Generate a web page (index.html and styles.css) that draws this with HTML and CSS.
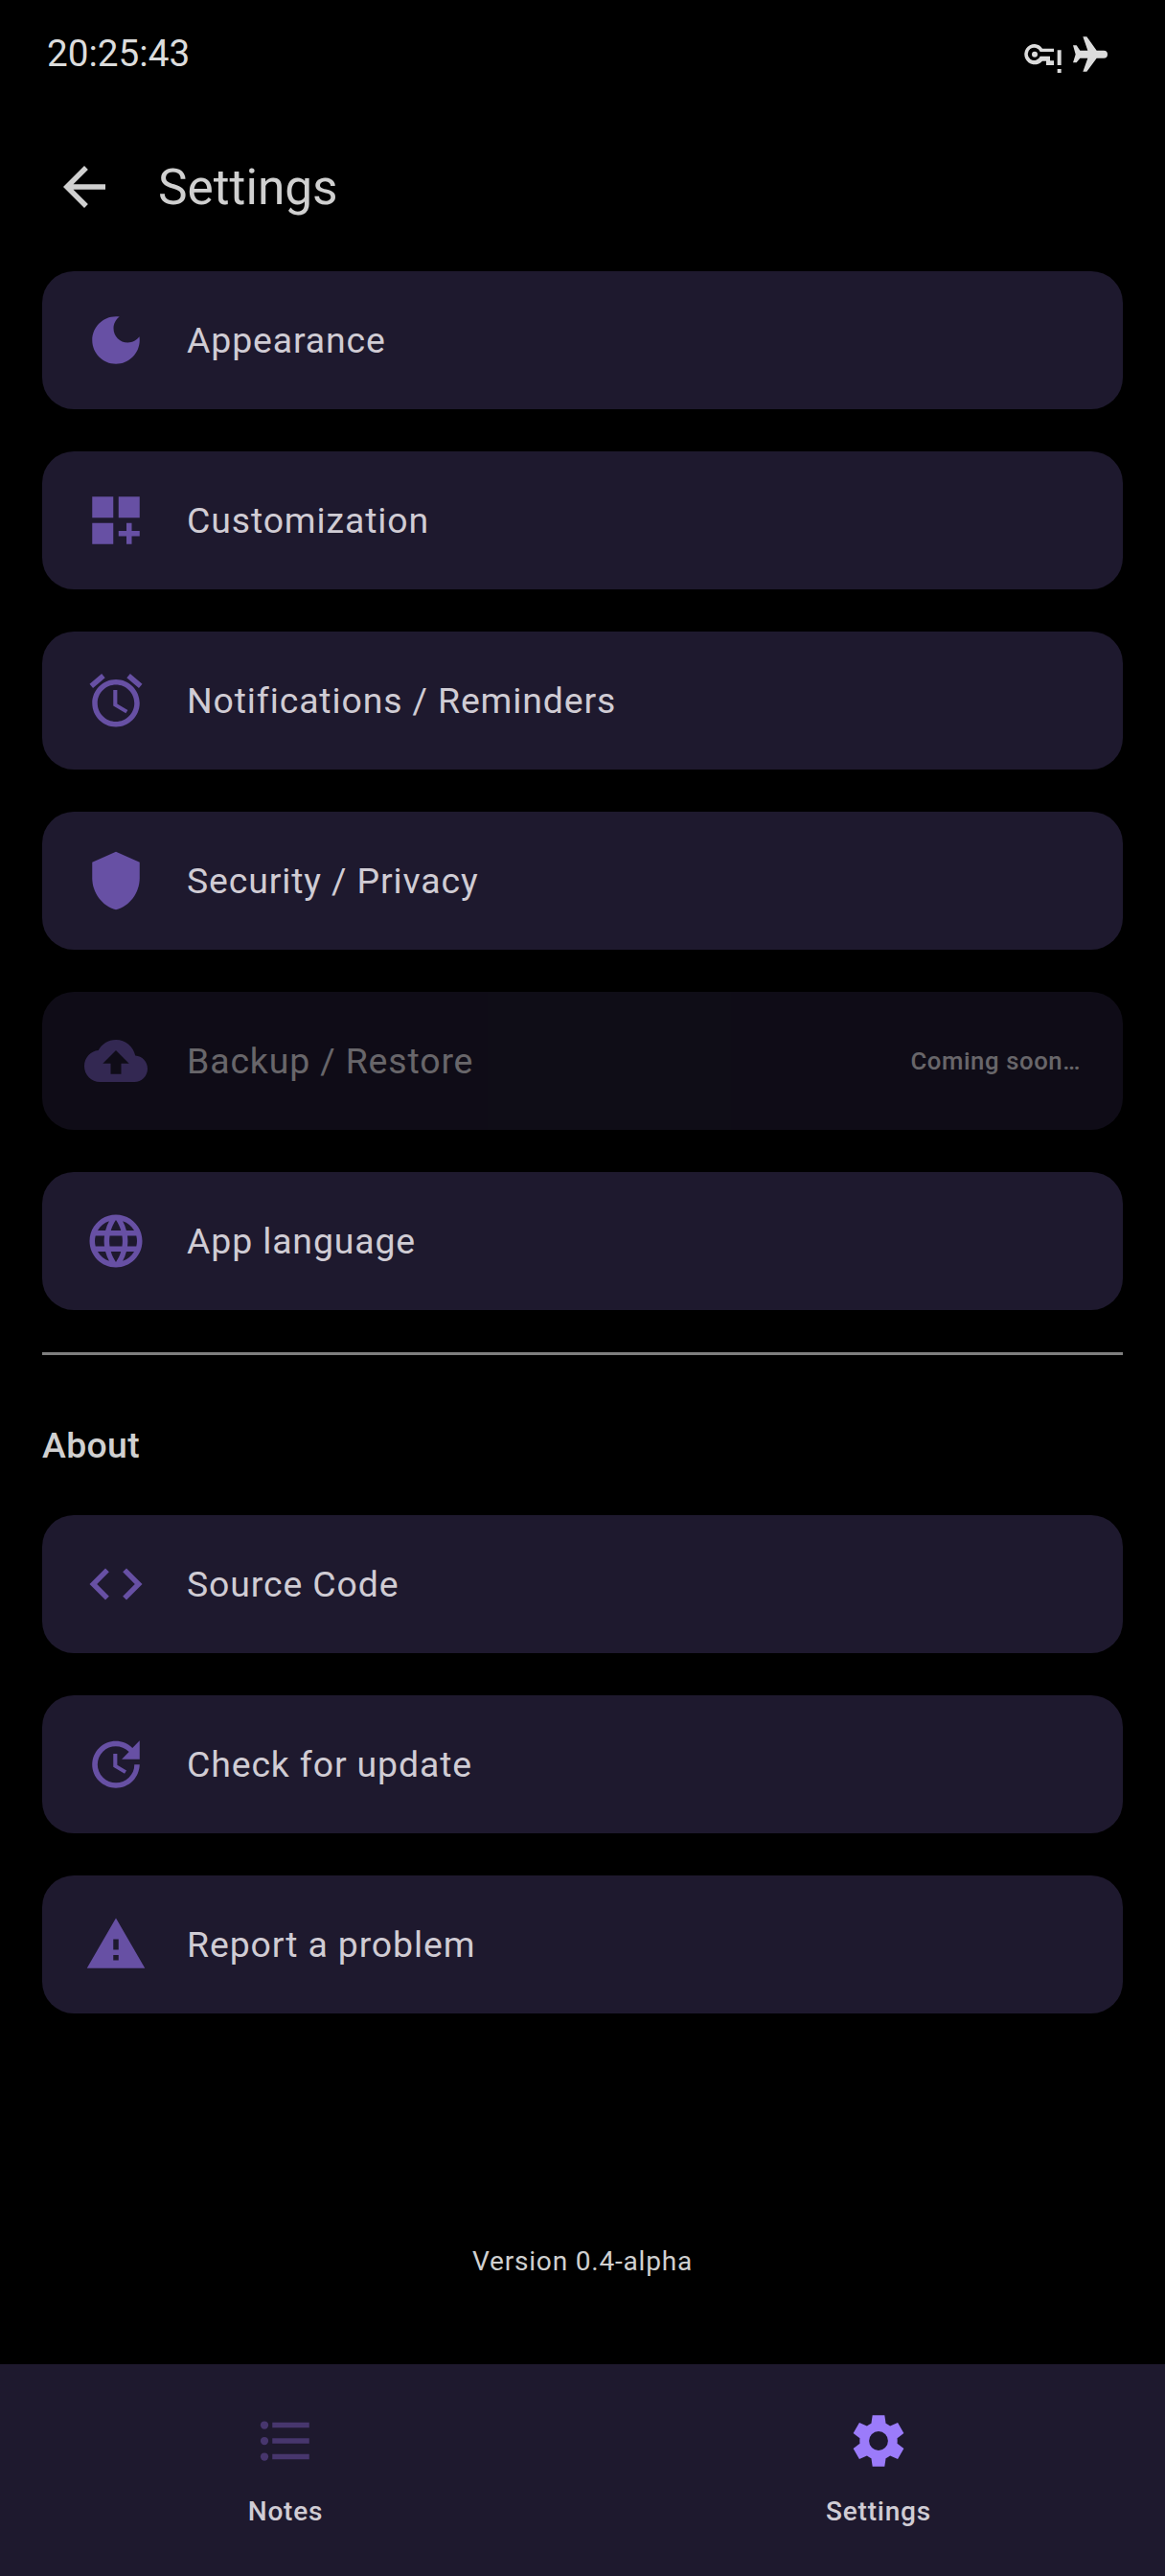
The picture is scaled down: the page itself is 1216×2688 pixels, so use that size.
FILE: index.html
```html
<!DOCTYPE html>
<html lang="en">
<head>
<meta charset="utf-8">
<title>Settings</title>
<link rel="stylesheet" href="styles.css">
</head>
<body>
<div class="screen">
  <header class="status-bar">
    <span class="clock">20:25:43</span>
    <svg class="status-icons" viewBox="156 108 270 126" aria-hidden="true">
      <path fill-rule="evenodd" d="M192 138a32 32 0 1 0 24 53h12v13h24v-14h-12v-14h-31a20 20 0 1 1 0-14h43v-10h-36a32 32 0 0 0-24-14z"/>
      <circle cx="192" cy="170" r="9"/>
      <path d="M263 157h12v47h-12zM263 216h12v12h-12z"/>
      <path d="M312 142h11l11 16h24l-15-43h12l31 43h22a12 12 0 0 1 0 24h-22l-31 42h-12l15-42h-24l-11 14h-11l8-26z"/>
    </svg>
  </header>

  <div class="top-bar">
    <svg class="icon" viewBox="0 0 24 24"><path d="M20 11H7.83l5.59-5.59L12 4l-8 8 8 8 1.41-1.41L7.83 13H20v-2z"/></svg>
    <h1 class="title">Settings</h1>
  </div>

  <main class="content">
    <section class="group">
      <a class="card"><svg class="icon" viewBox="0 0 24 24"><path d="M12 3c-4.97 0-9 4.03-9 9s4.03 9 9 9 9-4.03 9-9c0-.46-.04-.92-.1-1.36-.98 1.37-2.58 2.26-4.4 2.26-2.98 0-5.4-2.42-5.4-5.4 0-1.81.89-3.42 2.26-4.4C12.92 3.04 12.46 3 12 3z"/></svg><span class="label">Appearance</span></a>
      <a class="card"><svg class="icon" viewBox="0 0 24 24"><path d="M3 3h8v8H3zM13 3h8v8h-8zM3 13h8v8H3zM18 13h-2v3h-3v2h3v3h2v-3h3v-2h-3z"/></svg><span class="label">Customization</span></a>
      <a class="card"><svg class="icon" viewBox="0 0 24 24"><path d="M22 5.72l-4.6-3.86-1.29 1.53 4.6 3.86L22 5.72zM7.88 3.39L6.6 1.86 2 5.71l1.29 1.53 4.59-3.85zM12.5 8H11v6l4.75 2.85.75-1.23-4-2.37V8zM12 4c-4.97 0-9 4.03-9 9s4.02 9 9 9c4.97 0 9-4.03 9-9s-4.03-9-9-9zm0 16c-3.87 0-7-3.13-7-7s3.13-7 7-7 7 3.13 7 7-3.13 7-7 7z"/></svg><span class="label">Notifications / Reminders</span></a>
      <a class="card"><svg class="icon" viewBox="0 0 24 24"><path d="M12 1L3 5v6c0 5.55 3.84 10.74 9 12 5.16-1.26 9-6.45 9-12V5l-9-4z"/></svg><span class="label">Security / Privacy</span></a>
      <a class="card disabled"><svg class="icon" viewBox="0 0 24 24"><path d="M19.35 10.04C18.67 6.59 15.64 4 12 4 9.11 4 6.6 5.64 5.35 8.04 2.34 8.36 0 10.91 0 14c0 3.31 2.69 6 6 6h13c2.76 0 5-2.24 5-5 0-2.64-2.05-4.78-4.65-4.96zM14 13v4h-4v-4H7l5-5 5 5h-3z"/></svg><span class="label">Backup / Restore</span><span class="note">Coming soon…</span></a>
      <a class="card"><svg class="icon" viewBox="0 0 24 24"><path d="M11.99 2C6.47 2 2 6.48 2 12s4.47 10 9.99 10C17.52 22 22 17.52 22 12S17.52 2 11.99 2zm6.93 6h-2.95c-.32-1.25-.78-2.45-1.38-3.56 1.84.63 3.37 1.91 4.33 3.56zM12 4.04c.83 1.2 1.48 2.53 1.91 3.96h-3.82c.43-1.43 1.08-2.76 1.91-3.96zM4.26 14C4.1 13.36 4 12.69 4 12s.1-1.36.26-2h3.38c-.08.66-.14 1.32-.14 2s.06 1.34.14 2H4.26zm.82 2h2.95c.32 1.25.78 2.45 1.38 3.56-1.84-.63-3.37-1.9-4.33-3.56zm2.95-8H5.08c.96-1.66 2.49-2.93 4.33-3.56C8.81 5.55 8.35 6.75 8.03 8zM12 19.96c-.83-1.2-1.48-2.53-1.91-3.96h3.82c-.43 1.43-1.08 2.76-1.91 3.96zM14.34 14H9.66c-.09-.66-.16-1.32-.16-2s.07-1.35.16-2h4.68c.09.65.16 1.32.16 2s-.07 1.34-.16 2zm.25 5.56c.6-1.11 1.06-2.31 1.38-3.56h2.95c-.96 1.65-2.49 2.93-4.33 3.56zM16.36 14c.08-.66.14-1.32.14-2s-.06-1.34-.14-2h3.38c.16.64.26 1.31.26 2s-.1 1.36-.26 2h-3.38z"/></svg><span class="label">App language</span></a>
    </section>

    <hr class="divider">
    <h2 class="section-title">About</h2>

    <section class="group">
      <a class="card"><svg class="icon" viewBox="0 0 24 24"><path d="M9.4 16.6L4.8 12l4.6-4.6L8 6l-6 6 6 6 1.4-1.4zm5.2 0l4.6-4.6-4.6-4.6L16 6l6 6-6 6-1.4-1.4z"/></svg><span class="label">Source Code</span></a>
      <a class="card"><svg class="icon" viewBox="0 0 24 24"><path d="M21 10.12h-6.78l2.74-2.82c-2.73-2.7-7.15-2.8-9.88-.1-2.73 2.71-2.73 7.08 0 9.79s7.15 2.71 9.88 0C18.32 15.65 19 14.08 19 12.1h2c0 1.98-.88 4.55-2.64 6.29-3.51 3.48-9.21 3.48-12.72 0-3.5-3.47-3.53-9.11-.02-12.58s9.14-3.47 12.65 0L21 3v7.12zM12.5 8v4.25l3.5 2.08-.72 1.21L11 13V8h1.5z"/></svg><span class="label">Check for update</span></a>
      <a class="card"><svg class="icon" viewBox="0 0 24 24"><path d="M1 21h22L12 2 1 21zm12-3h-2v-2h2v2zm0-4h-2v-4h2v4z"/></svg><span class="label">Report a problem</span></a>
    </section>
  </main>

  <p class="version">Version 0.4-alpha</p>

  <nav class="nav-bar">
    <a class="nav-item">
      <svg class="icon" viewBox="0 0 24 24"><circle cx="4" cy="6" r="1.5"/><circle cx="4" cy="12" r="1.5"/><circle cx="4" cy="18" r="1.5"/><path d="M7 5h14v2H7zM7 11h14v2H7zM7 17h14v2H7z"/></svg>
      <span>Notes</span>
    </a>
    <a class="nav-item active">
      <svg class="icon" viewBox="-12 -12 24 24"><path fill-rule="evenodd" d="M-2.3-9.75H2.3L2.75-6.65Q3.6-6.2 4.39-5.6L7.29-6.87 9.59-2.88 7.1-1Q7.2 0 7.1 1L9.59 2.88 7.29 6.87 4.39 5.6Q3.6 6.2 2.75 6.65L2.3 9.75H-2.3L-2.75 6.65Q-3.6 6.2-4.39 5.6L-7.29 6.87-9.59 2.88-7.1 1Q-7.2 0-7.1-1L-9.59-2.88-7.29-6.87-4.39-5.6Q-3.6-6.2-2.75-6.65zM0-3.6A3.6 3.6 0 1 0 0 3.6 3.6 3.6 0 1 0 0-3.6z"/></svg>
      <span>Settings</span>
    </a>
  </nav>
</div>
</body>
</html>
```

FILE: styles.css
```css
* { box-sizing: border-box; }

body {
  margin: 0;
  background: #000;
  color: #d0d0d0;
  font-family: Roboto, "Liberation Sans", sans-serif;
}

.screen {
  display: flex;
  flex-direction: column;
  width: 1216px;
  height: 2688px;
}

.icon {
  flex: none;
  width: 66px;
  height: 66px;
  fill: currentColor;
}

.status-bar {
  display: flex;
  align-items: center;
  justify-content: space-between;
  height: 112px;
  padding: 0 58px 0 49px;
}

.clock {
  color: #dcdcdc;
  font-size: 38.7px;
  line-height: 46px;
}

.status-icons {
  width: 90px;
  height: 42px;
  margin-top: 2px;
  fill: #dcdcdc;
}

.top-bar {
  display: flex;
  align-items: center;
  height: 166px;
  padding-left: 55px;
}

.title {
  margin: 0 0 0 44px;
  font-size: 51.4px;
  font-weight: 400;
  line-height: 63px;
}

.content { padding: 5px 44px 0; }

.group {
  display: flex;
  flex-direction: column;
  gap: 44px;
}

.card {
  display: flex;
  align-items: center;
  height: 144px;
  padding: 0 44px;
  border-radius: 33px;
  background: #1e192e;
  color: #d0ccd4;
}

.card.disabled { opacity: .5; }

.card .icon { color: #6750a4; }

.label {
  margin-left: 41px;
  font-size: 37.4px;
  letter-spacing: .88px;
}

.note {
  margin-left: auto;
  font-size: 25.7px;
  font-weight: 500;
  letter-spacing: .6px;
}

.divider {
  height: 3px;
  margin: 44px 0 0;
  border: 0;
  background: #7f7f7f;
}

.section-title {
  margin: 66px 0 44px;
  font-size: 37.4px;
  font-weight: 500;
  letter-spacing: .35px;
  line-height: 57px;
}

.version {
  margin: auto 0 90px;
  color: #d0d0d0;
  font-size: 28.05px;
  letter-spacing: .8px;
  line-height: 34px;
  text-align: center;
}

.nav-bar {
  display: flex;
  gap: 23px;
  padding-right: 1px;
  height: 221px;
  background: #1e192e;
}

.nav-item {
  flex: 1;
  display: flex;
  flex-direction: column;
  align-items: center;
  gap: 23px;
  padding-top: 47px;
  color: #d0ccd4;
  font-size: 28.05px;
  font-weight: 500;
  letter-spacing: .75px;
  line-height: 36px;
}

.nav-item .icon { color: #47366d; }
.nav-item.active .icon { color: #9b7bfa; }
```
